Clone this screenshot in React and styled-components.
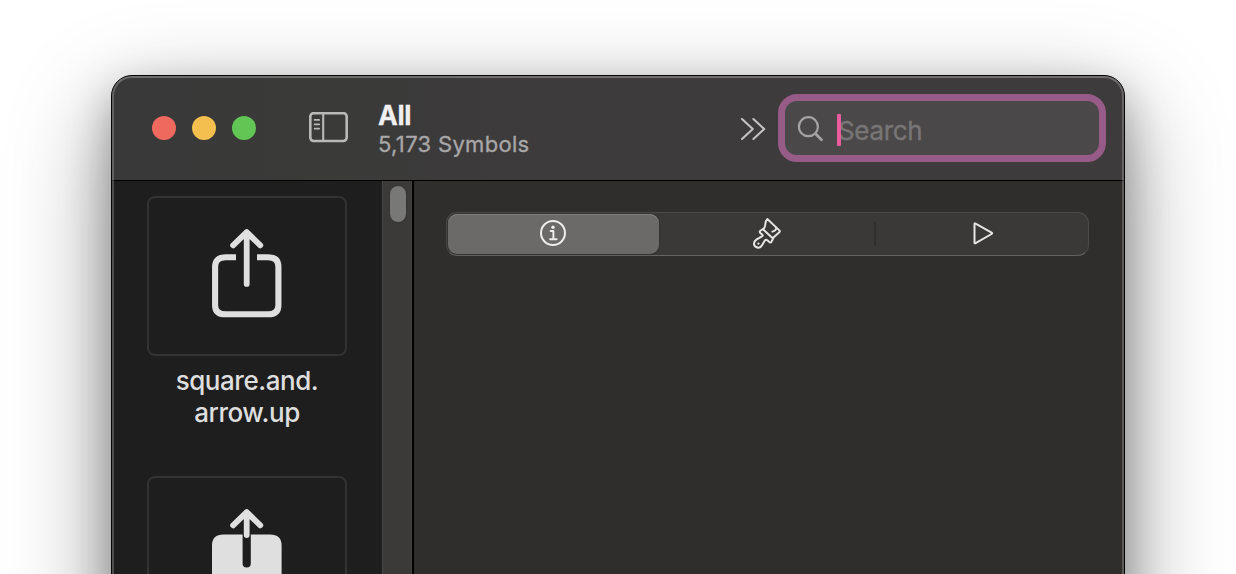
import React from 'react';
import styled, { createGlobalStyle } from 'styled-components';

const GlobalStyle = createGlobalStyle`
  * { box-sizing: border-box; }
  body { margin: 0; background: #fff; font-family: Inter, "Liberation Sans", sans-serif; }
  svg { display: block; flex: none; }
`;

const Desktop = styled.main`
  height: 574px;
  padding: 75px 111px 0;
  overflow: hidden;
  background: #fff;
`;

const Window = styled.section`
  position: relative;
  width: 1014px;
  height: 780px;
  border: 1px solid #050505;
  border-radius: 21px;
  background: #1e1e1e;
  box-shadow: 0 36px 100px rgba(0, 0, 0, 0.42), 0 16px 44px rgba(0, 0, 0, 0.28);

  &::after {
    content: '';
    position: absolute;
    inset: 0;
    border: 2px solid rgba(255, 255, 255, 0.21);
    border-top-color: rgba(255, 255, 255, 0.26);
    border-radius: 20px;
    pointer-events: none;
  }
`;

const Toolbar = styled.header`
  display: flex;
  align-items: center;
  height: 105px;
  padding: 0 18px 0 40px;
  border-bottom: 1px solid #000;
  border-radius: 20px 20px 0 0;
  background: linear-gradient(90deg, #393939 0%, #3a3a39 22%, #3e3b3c 45%, #3e3b3c 100%);
`;

const TrafficLights = styled.div`
  display: flex;
  gap: 16px;
  margin-right: 53px;
`;

const Light = styled.span`
  width: 24px;
  height: 24px;
  border-radius: 50%;
  background: ${({ $color }) => $color};
`;

const SidebarButton = styled.span`
  margin-bottom: 2px;
`;

const Heading = styled.div`
  flex: 1;
  margin: 1px 0 0 30px;
  white-space: nowrap;
`;

const Title = styled.h1`
  margin: 0;
  color: #f1f0f0;
  font-size: 26.5px;
  font-weight: 700;
  line-height: 30px;
  letter-spacing: -0.4px;
  -webkit-text-stroke: 0.3px currentColor;
`;

const Subtitle = styled.p`
  margin: 0;
  color: #a9a7a8;
  font-size: 22px;
  line-height: 28px;
  letter-spacing: 0.32px;
  -webkit-text-stroke: 0.3px currentColor;
`;

const OverflowButton = styled.span`
  margin-top: 2px;
`;

const SearchField = styled.label`
  display: flex;
  align-items: center;
  width: 328px;
  height: 68px;
  margin-left: 12px;
  padding: 2px 0 0 12px;
  border: 7px solid #965b86;
  border-radius: 19px;
  background: #4a4848;
`;

const Caret = styled.span`
  width: 4px;
  height: 32px;
  margin: 2px -3px 0 13px;
  border-radius: 1px;
  background: #ec5b9e;
  z-index: 1;
`;

const Placeholder = styled.span`
  margin-top: 4px;
  color: #777576;
  font-size: 26px;
  line-height: 32px;
  letter-spacing: -0.35px;
  -webkit-text-stroke: 0.4px currentColor;
`;

const Body = styled.div`
  display: flex;
  height: 673px;
`;

const SymbolList = styled.aside`
  display: flex;
  flex-direction: column;
  align-items: center;
  width: 270px;
  padding-top: 15px;
  background: #1e1e1e;
`;

const SymbolItem = styled.figure`
  display: flex;
  flex-direction: column;
  align-items: center;
  width: 200px;
  height: 280px;
  margin: 0;
`;

const Tile = styled.div`
  display: flex;
  justify-content: center;
  width: 200px;
  height: 160px;
  padding-top: 31px;
  border: 2px solid #333;
  border-radius: 8px;
`;

const SymbolName = styled.figcaption`
  margin-top: 9px;
  color: #dedede;
  font-size: 26px;
  font-weight: 500;
  line-height: 32px;
  letter-spacing: -0.45px;
  text-align: center;
`;

const ScrollTrack = styled.div`
  width: 30px;
  padding: 5px 0 0 7px;
  border-left: 1px solid #474644;
  border-right: 1px solid #444341;
  background: #3b3a38;
`;

const ScrollThumb = styled.div`
  width: 16px;
  height: 36px;
  border-radius: 8px;
  background: #787877;
  box-shadow: 0 0 2px rgba(0, 0, 0, 0.3);
`;

const Inspector = styled.section`
  flex: 1;
  padding: 31px 34px 0 32px;
  border-left: 2px solid #000;
  background: #2f2e2c;
`;

const Segments = styled.nav`
  display: flex;
  align-items: center;
  width: 643px;
  height: 44px;
  padding: 1px;
  border: 1px solid #4a4a48;
  border-bottom-color: #62625f;
  border-radius: 11px;
  background: #3a3937;
`;

const Segment = styled.div`
  display: flex;
  flex: none;
  align-items: center;
  justify-content: center;
  width: ${({ $width }) => $width}px;
  height: 40px;
  padding: 0 ${({ $selected }) => ($selected ? 1 : 0)}px 2px 0;
  border-radius: 9px;
  background: ${({ $selected }) => ($selected ? '#6b6a68' : 'transparent')};
  box-shadow: ${({ $selected }) =>
    $selected ? 'inset 0 1px #81807e, 0 0 2px rgba(0,0,0,.45)' : 'none'};
`;

const Divider = styled.span`
  flex: none;
  width: 2px;
  height: 24px;
  background: #302f2d;
`;

const SidebarIcon = () => (
  <svg width="39" height="31" viewBox="0 0 39 31" fill="none" stroke="#bab9b9">
    <rect x="1.3" y="1.1" width="36.4" height="27.9" rx="3.4" strokeWidth="2.6" />
    <path d="M14.2 1v28" strokeWidth="2.1" />
    <path d="M5.6 7.9h4.6M5.6 12.3h4.6M5.6 16.6h4.6" strokeWidth="1.7" strokeLinecap="round" />
  </svg>
);

const OverflowIcon = () => (
  <svg width="26" height="24" viewBox="0 0 26 24" fill="none" stroke="#c5c3c4" strokeWidth="2.1" strokeLinecap="round" strokeLinejoin="round">
    <path d="M2 2l10.8 10L2 22M13.4 2l10.8 10-10.8 10" />
  </svg>
);

const SearchIcon = () => (
  <svg width="27" height="27" viewBox="0 0 27 27" fill="none" stroke="#a5a3a4" strokeLinecap="round">
    <circle cx="11.4" cy="10.7" r="9.5" strokeWidth="2.2" />
    <path d="M18.5 17.8l6 6" strokeWidth="2.8" />
  </svg>
);

const Arrow = ({ end }) => (
  <path d={`M21.1 16.3L34.7 3.1l13.6 13.2M34.7 3.4V${end}`} strokeWidth="5.8" strokeLinecap="round" strokeLinejoin="round" />
);

const ShareIcon = () => (
  <svg width="70" height="90" viewBox="0 0 70 90" fill="none" stroke="#dfdfdf">
    <path d="M24 28.3H13.5Q3.1 28.3 3.1 37.7V76.2Q3.1 85.3 13.5 85.3H56Q66.4 85.3 66.4 76.2V37.7Q66.4 28.3 56 28.3H45" strokeWidth="6.1" />
    <Arrow end="54.9" />
  </svg>
);

const ShareFilledIcon = () => (
  <svg width="70" height="90" viewBox="0 0 70 90" fill="none" stroke="#dfdfdf">
    <path d="M0 36.4Q0 25.5 11.5 25.5H30.6V54.4a4.1 4.1 0 0 0 8.2 0V25.5H58Q69.6 25.5 69.6 36.4V77Q69.6 88 58 88H11.5Q0 88 0 77Z" fill="#dfdfdf" stroke="none" />
    <Arrow end="26" />
  </svg>
);

const InfoIcon = () => (
  <svg width="26" height="26" viewBox="0 0 26 26" fill="none" stroke="#eeeeed">
    <circle cx="13" cy="13" r="12" strokeWidth="2" />
    <path d="M10.6 11h2.8v8M10.1 19.2h6.5" strokeWidth="1.9" strokeLinecap="round" strokeLinejoin="round" />
    <circle cx="13" cy="7.2" r="1.7" fill="#eeeeed" stroke="none" />
  </svg>
);

const BrushIcon = () => (
  <svg width="30" height="33" viewBox="66 51 90 99" fill="none" stroke="#e6e6e5" strokeWidth="5.8" strokeLinecap="round" strokeLinejoin="round">
    <path d="M112 57L148 91Q151 94 148 97L132 111Q128 115 124 111L99 88Q105 84 106 73Q107 61 112 57Z" />
    <path d="M99 87L90 93Q88 96 91 99L97 104Q100 107 96 109L80 118Q71 124 72 133Q74 142 84 143Q92 143 97 134L105 121Q108 117 112 121L119 127Q122 129 124 126L130 114" />
    <path d="M139 83Q139 91 127 95" />
    <circle cx="85" cy="131" r="2.4" fill="#e6e6e5" strokeWidth="1.5" />
  </svg>
);

const PlayIcon = () => (
  <svg width="21" height="23" viewBox="0 0 21 23" fill="none" stroke="#e6e6e5" strokeWidth="2" strokeLinejoin="round">
    <path d="M1.5 2.2Q1.5 1 2.6 1.6L18.6 10.6Q19.7 11.3 18.6 12L2.6 21.1Q1.5 21.7 1.5 20.5Z" />
  </svg>
);

export default function App() {
  return (
    <>
      <GlobalStyle />
      <Desktop>
        <Window>
          <Toolbar>
            <TrafficLights>
              <Light $color="#ee6a5f" />
              <Light $color="#f5bf4f" />
              <Light $color="#62c655" />
            </TrafficLights>
            <SidebarButton><SidebarIcon /></SidebarButton>
            <Heading>
              <Title>All</Title>
              <Subtitle>5,173 Symbols</Subtitle>
            </Heading>
            <OverflowButton><OverflowIcon /></OverflowButton>
            <SearchField>
              <SearchIcon />
              <Caret />
              <Placeholder>Search</Placeholder>
            </SearchField>
          </Toolbar>
          <Body>
            <SymbolList>
              <SymbolItem>
                <Tile><ShareIcon /></Tile>
                <SymbolName>square.and.<br />arrow.up</SymbolName>
              </SymbolItem>
              <SymbolItem>
                <Tile><ShareFilledIcon /></Tile>
              </SymbolItem>
            </SymbolList>
            <ScrollTrack><ScrollThumb /></ScrollTrack>
            <Inspector>
              <Segments>
                <Segment $width={211} $selected><InfoIcon /></Segment>
                <Segment $width={215}><BrushIcon /></Segment>
                <Divider />
                <Segment $width={215}><PlayIcon /></Segment>
              </Segments>
            </Inspector>
          </Body>
        </Window>
      </Desktop>
    </>
  );
}
